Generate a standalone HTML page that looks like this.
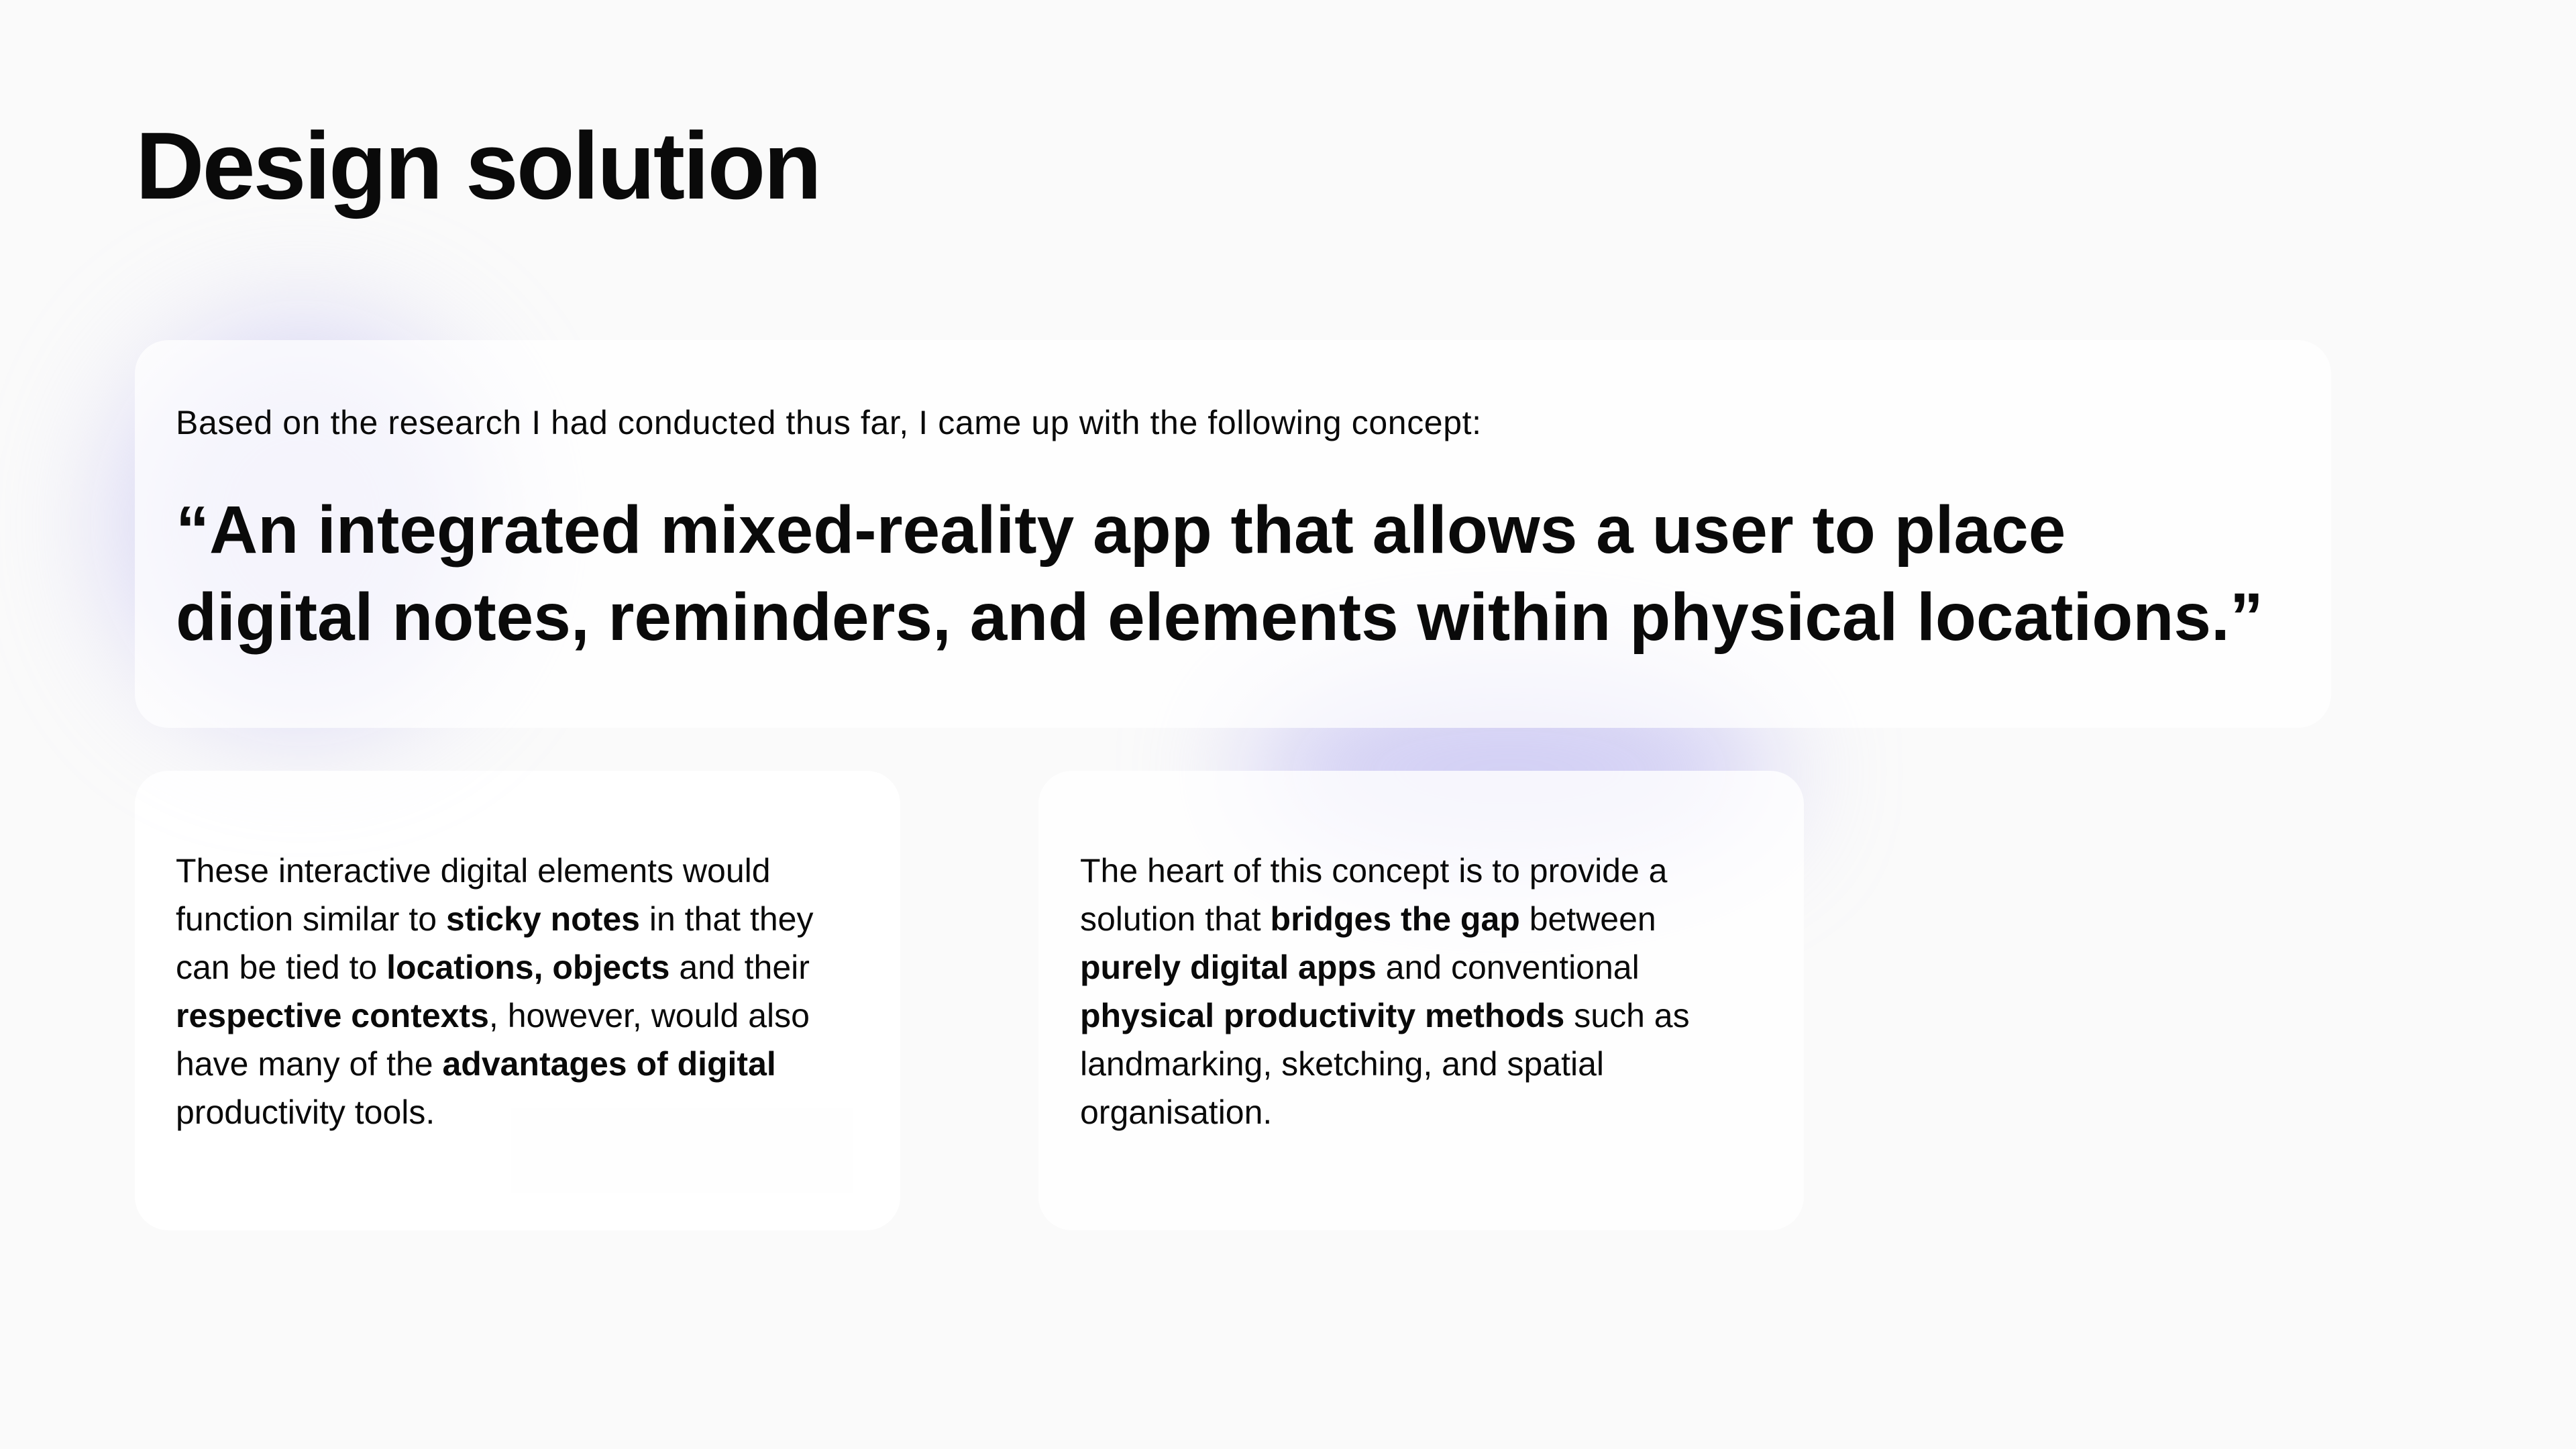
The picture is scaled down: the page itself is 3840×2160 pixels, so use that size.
<!DOCTYPE html>
<html><head><meta charset="utf-8"><style>
html,body{margin:0;padding:0;}
body{width:3840px;height:2160px;background:#fafafa;position:relative;overflow:hidden;font-family:"Liberation Sans",sans-serif;color:#0a0a0a;}
.glow{position:absolute;border-radius:50%;filter:blur(90px);}
h1{position:absolute;left:202px;top:166px;margin:0;font-size:142px;font-weight:bold;letter-spacing:-3px;}
.card{position:absolute;background:rgba(255,255,255,0.72);border-radius:50px;}
.p{position:absolute;font-size:50px;line-height:72px;}
.q{position:absolute;font-size:100px;line-height:130px;font-weight:bold;letter-spacing:0px;}
b{font-weight:bold;}
</style></head><body>
<div class="glow" style="left:170px;top:480px;width:560px;height:600px;background:rgba(190,185,240,0.55);"></div>
<div class="glow" style="left:1850px;top:1000px;width:800px;height:300px;background:rgba(180,175,240,0.6);"></div>
<h1>Design solution</h1>
<div class="card" style="left:201px;top:507px;width:3274px;height:578px;"></div>
<div class="card" style="left:201px;top:1149px;width:1141px;height:685px;background:rgba(255,255,255,0.85);"></div>
<div class="card" style="left:1548px;top:1149px;width:1141px;height:685px;background:rgba(255,255,255,0.8);"></div>
<div class="p" style="left:262px;top:594px;letter-spacing:0.6px;">Based on the research I had conducted thus far, I came up with the following concept:</div>
<div class="q" style="left:262px;top:725px;">“An integrated mixed-reality app that allows a user to place<br>digital notes, reminders, and elements within physical locations.”</div>
<div class="p" style="left:262px;top:1262px;">These interactive digital elements would<br>function similar to <b>sticky notes</b> in that they<br>can be tied to <b>locations, objects</b> and their<br><b>respective contexts</b>, however, would also<br>have many of the <b>advantages of digital</b><br>productivity tools.</div>
<div class="p" style="left:1610px;top:1262px;">The heart of this concept is to provide a<br>solution that <b>bridges the gap</b> between<br><b>purely digital apps</b> and conventional<br><b>physical productivity methods</b> such as<br>landmarking, sketching, and spatial<br>organisation.</div>
</body></html>
